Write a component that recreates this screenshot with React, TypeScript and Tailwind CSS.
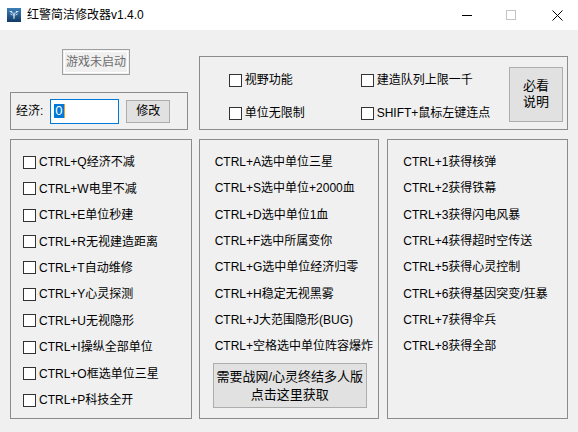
import React from "react"

// left column: checkboxes with hotkeys
const toggles = [
  "CTRL+Q经济不减",
  "CTRL+W电里不减",
  "CTRL+E单位秒建",
  "CTRL+R无视建造距离",
  "CTRL+T自动维修",
  "CTRL+Y心灵探测",
  "CTRL+U无视隐形",
  "CTRL+I操纵全部单位",
  "CTRL+O框选单位三星",
  "CTRL+P科技全开",
]

const unitKeys = [
  "CTRL+A选中单位三星",
  "CTRL+S选中单位+2000血",
  "CTRL+D选中单位1血",
  "CTRL+F选中所属变你",
  "CTRL+G选中单位经济归零",
  "CTRL+H稳定无视黑雾",
  "CTRL+J大范围隐形(BUG)",
  "CTRL+空格选中单位阵容爆炸",
]

const giveKeys = [
  "CTRL+1获得核弹",
  "CTRL+2获得铁幕",
  "CTRL+3获得闪电风暴",
  "CTRL+4获得超时空传送",
  "CTRL+5获得心灵控制",
  "CTRL+6获得基因突变/狂暴",
  "CTRL+7获得伞兵",
  "CTRL+8获得全部",
]

function Box() {
  return <span className="w-[13px] h-[13px] shrink-0 border border-[#333] bg-white" />
}

function Check({ label }: { label: string }) {
  return (
    <div className="h-[17px] flex items-center gap-[3px]">
      <Box />
      <span className="whitespace-nowrap">{label}</span>
    </div>
  )
}

function AppIcon() {
  return (
    <svg width="14" height="14" viewBox="0 0 14 14">
      <defs>
        <linearGradient id="ic" x1="0" y1="0" x2="0" y2="1">
          <stop offset="0" stopColor="#3d7fb8" />
          <stop offset="1" stopColor="#123a66" />
        </linearGradient>
      </defs>
      <rect width="14" height="14" fill="url(#ic)" />
      <path d="M2 3 L6 6 L5 3 Z M12 3 L8 6 L9 3 Z M3 5 L6.3 7.5 L4 7 Z M11 5 L7.7 7.5 L10 7 Z" fill="#cfe6f7" />
      <path d="M7 4 L7.8 6 L7.4 11 L6.6 11 L6.2 6 Z" fill="#e8f4fc" />
    </svg>
  )
}

export default function App() {
  return (
    <div className="w-[578px] h-[432px] overflow-hidden font-['Liberation_Sans','Noto_Sans_CJK_SC',sans-serif] text-[12px] text-black">
      {/* title bar */}
      <div className="h-[30px] bg-white flex items-center">
        <div className="ml-[7px]">
          <AppIcon />
        </div>
        <span className="ml-[6px] text-[12px]">红警简洁修改器v1.4.0</span>
        <div className="ml-auto flex items-center pr-[15px]">
          <span className="w-[10px] h-px bg-black" />
          <span className="ml-[34px] w-[10px] h-[10px] border border-[#c4c4c4]" />
          <svg className="ml-[36px]" width="11" height="11" viewBox="0 0 11 11">
            <path d="M0.5 0.5 L10.5 10.5 M10.5 0.5 L0.5 10.5" stroke="#000" strokeWidth="1" />
          </svg>
        </div>
      </div>

      {/* body */}
      <div className="h-[402px] bg-[#f0f0f0] px-[10px]">
        <div className="flex">
          <div className="w-[178px] flex flex-col">
            <div className="mt-[19px] ml-[52px] w-[68px] h-[26px] border border-[#a0a0a0] p-px">
              <div className="h-full border border-white flex items-center justify-center text-[#6d6d6d]">
                游戏未启动
              </div>
            </div>
            <div className="mt-[17px] h-[38px] border border-[#8c8c8c] flex items-center">
              <span className="ml-[5px]">经济:</span>
              <div className="ml-[7px] w-[69px] h-[25px] bg-white border border-[#0078d7] flex items-center pl-[3px]">
                <span className="bg-[#0078d7] text-white text-[13px] leading-[14px] px-px">0</span>
                <span className="w-px h-[14px] bg-[#f0a030]" />
              </div>
              <button className="ml-[7px] w-[44px] h-[23px] bg-[#e1e1e1] border border-[#adadad] flex items-center justify-center">
                修改
              </button>
            </div>
          </div>

          <div className="ml-[11px] mt-[26px] w-[370px] h-[74px] border border-[#8c8c8c] flex items-center">
            <div className="ml-[29px] mt-[7px] flex flex-col gap-[16px]">
              <Check label="视野功能" />
              <Check label="单位无限制" />
            </div>
            <div className="ml-[56px] mt-[7px] flex flex-col gap-[16px]">
              <Check label="建造队列上限一千" />
              <Check label="SHIFT+鼠标左键连点" />
            </div>
            <button className="ml-auto mr-[4px] mt-[2px] w-[54px] h-[55px] bg-[#e1e1e1] border border-[#adadad] flex items-center justify-center text-[13px] leading-[16px]">
              必看
              <br />
              说明
            </button>
          </div>
        </div>

        <div className="mt-[9px] flex h-[280px]">
          <div className="w-[182px] border border-[#8c8c8c] pt-[9px] pl-[12px] flex flex-col">
            {toggles.map((t) => (
              <div key={t} className="h-[26.45px] flex items-center">
                <Check label={t} />
              </div>
            ))}
          </div>

          <div className="ml-[7px] w-[181px] border border-[#8c8c8c] pt-[9px] flex flex-col">
            {unitKeys.map((t) => (
              <div key={t} className="h-[26.3px] flex items-center pl-[15px] whitespace-nowrap">
                {t}
              </div>
            ))}
            <button className="mt-[4px] ml-[13px] w-[154px] h-[45px] bg-[#e1e1e1] border border-[#adadad] flex flex-col items-center justify-center text-[13px] leading-[18px]">
              <span>需要战网/心灵终结多人版</span>
              <span>点击这里获取</span>
            </button>
          </div>

          <div className="ml-[8px] w-[181px] border border-[#8c8c8c] pt-[9px] flex flex-col">
            {giveKeys.map((t) => (
              <div key={t} className="h-[26.3px] flex items-center pl-[15px] whitespace-nowrap">
                {t}
              </div>
            ))}
          </div>
        </div>
      </div>
    </div>
  )
}
